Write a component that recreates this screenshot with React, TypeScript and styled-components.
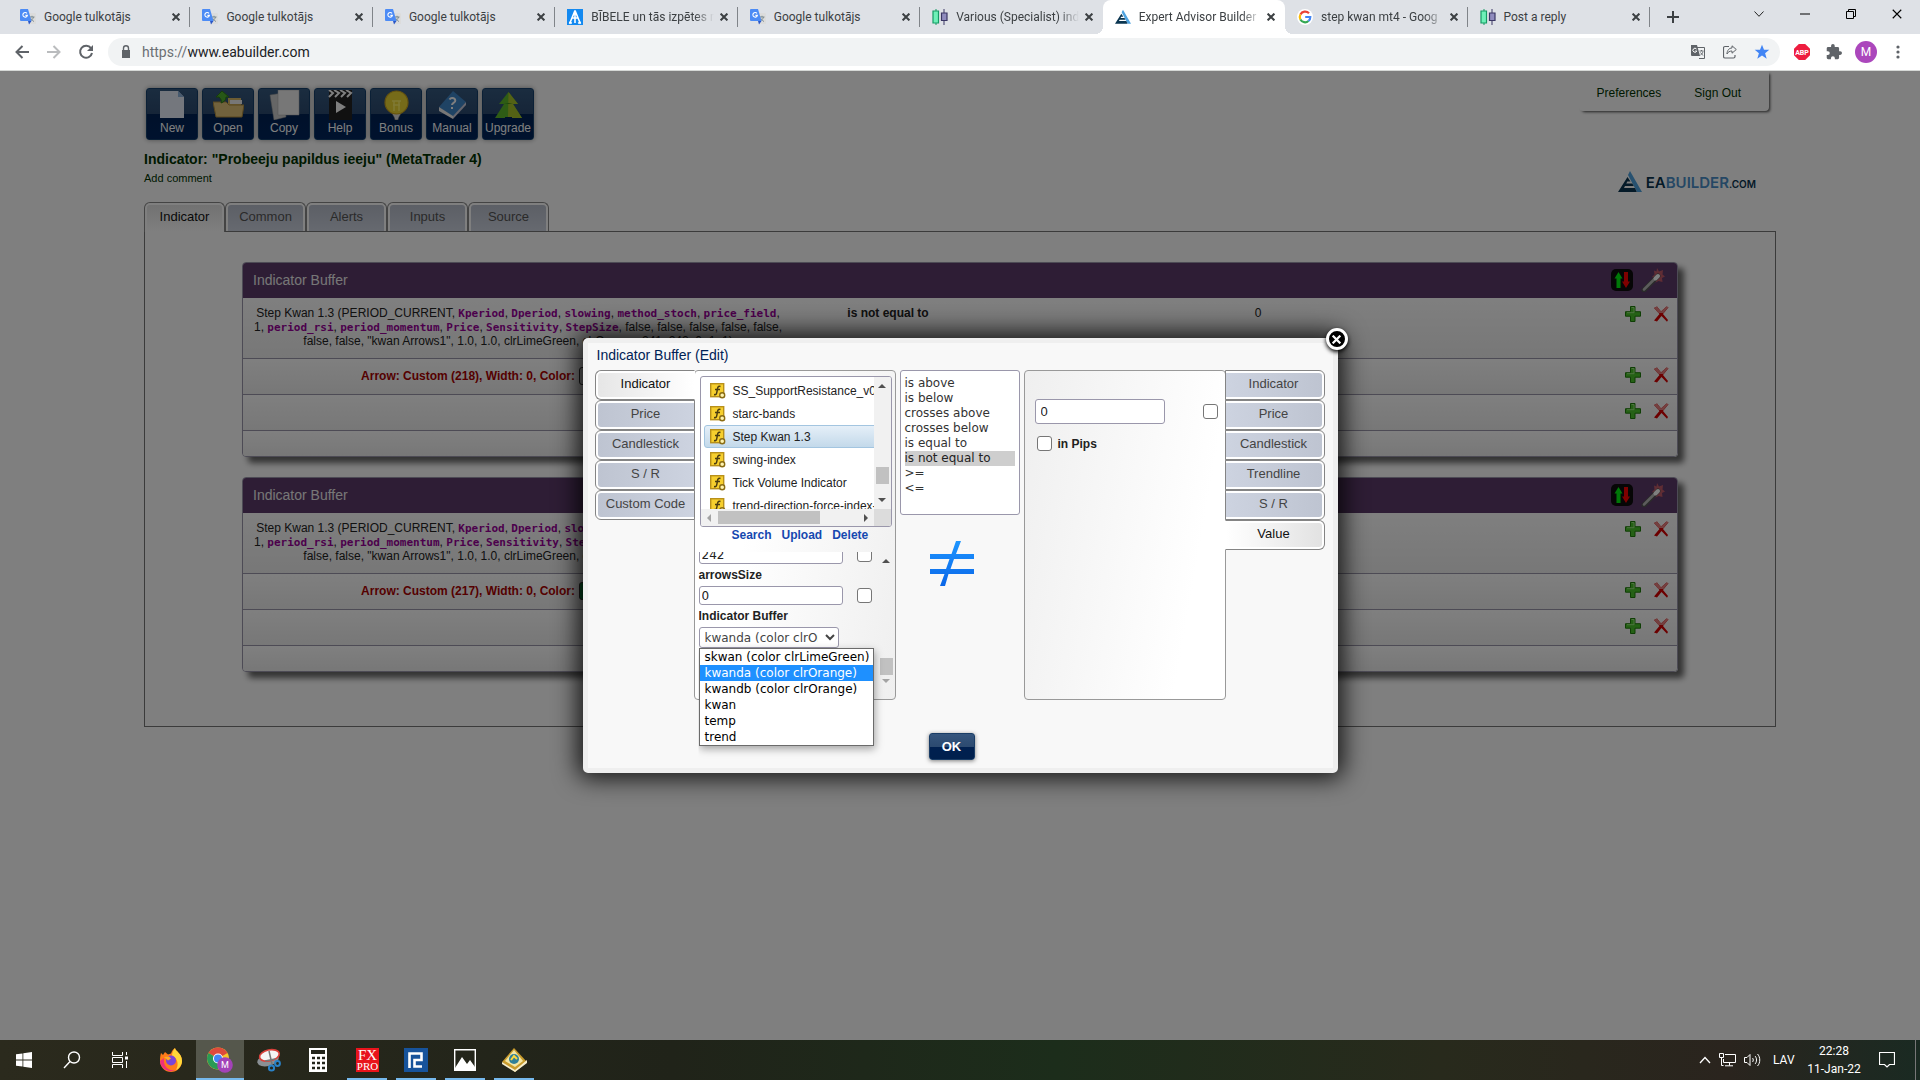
import React, { useState } from "react";
import styled, { createGlobalStyle, css } from "styled-components";

const ui = `Roboto, "Open Sans", sans-serif`;
const arial = `"Liberation Sans", Arial, sans-serif`;
const verdana = `"DejaVu Sans", Verdana, sans-serif`;

const GlobalStyle = createGlobalStyle`
  *, *::before, *::after { box-sizing: border-box; }
  body { margin: 0; font-family: ${arial}; font-size: 12px; color: #222; }
  button { font: inherit; color: inherit; border: 0; background: none; padding: 0; cursor: pointer; }
  ul { list-style: none; margin: 0; padding: 0; }
  a { color: inherit; text-decoration: none; }
  svg { display: block; flex: none; }
`;

const Screen = styled.div`
  height: 100vh;
  display: flex;
  flex-direction: column;
  overflow: hidden;
`;

/* ---------- browser frame ---------- */

const TabStrip = styled.div`
  height: 34px;
  flex: none;
  display: flex;
  background: #dee1e6;
  padding-left: 8px;
  font-family: ${ui};
  color: #3c4043;
`;
const BrowserTabs = styled.div`
  flex: 0 1 1642px;
  display: flex;
  min-width: 0;
`;
const BrowserTab = styled.div<{ $active?: boolean; $divider?: boolean }>`
  flex: 1 1 0;
  min-width: 0;
  display: flex;
  align-items: center;
  padding: 0 6px 0 12px;
  position: relative;
  border-radius: 8px 8px 0 0;
  background: ${(p) => (p.$active ? "#fff" : "transparent")};
  ${(p) =>
    p.$divider &&
    css`
      &::after {
        content: "";
        position: absolute;
        right: 0;
        top: 7px;
        height: 20px;
        width: 1px;
        background: #808489;
      }
    `}
  ${(p) =>
    p.$active &&
    css`
      &::before {
        content: "";
        position: absolute;
        left: -8px;
        right: -8px;
        bottom: 0;
        height: 8px;
        background:
          radial-gradient(circle at 0 0, transparent 8px, #fff 8px) left / 8px 8px no-repeat,
          radial-gradient(circle at 100% 0, transparent 8px, #fff 8px) right / 8px 8px no-repeat;
      }
    `}
`;
const TabTitle = styled.span<{ $fade?: boolean }>`
  flex: 1;
  min-width: 0;
  margin-left: 8px;
  font-size: 12px;
  line-height: 16px;
  white-space: nowrap;
  overflow: hidden;
  ${(p) => p.$fade && "mask-image: linear-gradient(to right, #000 84%, transparent);"}
`;
const TabClose = styled.button`
  width: 16px;
  height: 16px;
  margin-left: 2px;
  display: grid;
  place-items: center;
`;
const NewTab = styled.button`
  width: 28px;
  margin-left: 9px;
  display: grid;
  place-items: center;
`;
const WindowControls = styled.div`
  margin-left: auto;
  display: flex;
  height: 28px;
`;
const WindowButton = styled.button`
  width: 46px;
  display: grid;
  place-items: center;
`;
const AddressRow = styled.div`
  height: 37px;
  flex: none;
  display: flex;
  align-items: center;
  padding: 0 6px;
  background: #fff;
  border-bottom: 1px solid #d5d8d6;
  font-family: ${ui};
`;
const NavButton = styled.button`
  width: 32px;
  height: 32px;
  display: grid;
  place-items: center;
`;
const UrlPill = styled.div`
  flex: 1;
  height: 28px;
  margin: 0 6px;
  padding: 0 2px 0 11px;
  display: flex;
  align-items: center;
  gap: 9px;
  border-radius: 14px;
  background: #f1f3f4;
  font-size: 14px;
`;
const PillActions = styled.div`
  display: flex;
`;
const UrlText = styled.span`
  flex: 1;
  color: #202124;
  span { color: #6b6f73; }
`;
const Avatar = styled.span`
  width: 22px;
  height: 22px;
  border-radius: 50%;
  background: #ab47bc;
  color: #fff;
  font-size: 12px;
  line-height: 22px;
  text-align: center;
`;

/* ---------- web page ---------- */

const Page = styled.main`
  flex: 1;
  min-height: 0;
  position: relative;
  background: #fff;
  padding: 0 144px;
  overflow: hidden;
`;
const PageTop = styled.div`
  display: flex;
  justify-content: space-between;
  align-items: flex-start;
`;
const Toolbar = styled.div`
  display: flex;
  gap: 4px;
  padding: 17px 2px 0;
`;
const ToolButton = styled.button`
  width: 52px;
  height: 52px;
  display: flex;
  flex-direction: column;
  align-items: center;
  padding-top: 1px;
  border: 1px solid #16406c;
  border-radius: 3px;
  background: linear-gradient(#35597f, #2c4a70 50%, #002255 50%, #00255c);
  box-shadow: 0 0 5px rgba(0, 0, 0, 0.4);
  color: #fff;
  line-height: 16px;
`;
const AccountLinks = styled.nav`
  display: flex;
  gap: 33px;
  height: 40px;
  margin-right: 7px;
  padding: 14px 28px 0 18px;
  line-height: 16px;
  color: #003300;
  border-radius: 0 0 4px 4px;
  box-shadow: 2px 2px 3px -1px #444;
`;
const Heading = styled.div`
  display: flex;
  justify-content: space-between;
  align-items: flex-start;
  height: 44px;
  margin: 9px 0;
  color: #003300;
`;
const PageTitle = styled.h1`
  margin: 0;
  font-size: 14px;
  line-height: 20px;
`;
const CommentLink = styled.a`
  font-size: 11px;
  line-height: 18px;
`;
const Brand = styled.a`
  display: flex;
  align-items: center;
  gap: 4px;
  margin: 22px 20px 0 0;
  height: 22px;
  font-family: Inter, sans-serif;
  font-weight: 600;
  font-size: 15px;
  color: #0a3550;
  em { font-style: normal; color: #4b8fc8; }
  small { font-size: 10px; }
`;
const PageTabs = styled.div`
  display: flex;
`;
const PageTab = styled.button<{ $active?: boolean }>`
  display: flex;
  align-items: flex-start;
  justify-content: center;
  width: 81px;
  height: 29px;
  padding: 2px 2px 0;
  font-size: 13px;
  line-height: 24px;
  border: 1px solid #888;
  border-bottom: 0;
  border-radius: 6px 6px 0 0;
  background: ${(p) =>
    p.$active
      ? "linear-gradient(#e4e4e4, #fff) content-box, #fff"
      : "linear-gradient(#b9bfcc, #cdd3e0) content-box, #fff"};
  color: ${(p) => (p.$active ? "#111" : "#555")};
  ${(p) => p.$active && "height: 30px; margin-bottom: -1px; position: relative;"}
`;
const Workspace = styled.section`
  display: flex;
  flex-direction: column;
  gap: 20px;
  padding: 30px 97px 54px;
  border: 1px solid #777;
`;
const Card = styled.article`
  border: 1px solid #9a97ab;
  border-radius: 4px;
  overflow: hidden;
  box-shadow: 6px 6px 6px #666;
`;
const CardHeader = styled.header`
  height: 35px;
  display: flex;
  align-items: center;
  padding: 0 12px 2px 10px;
  gap: 8px;
  background: #5c3a6b;
  color: #eee;
  h2 { flex: 1; margin: 0; font-size: 14px; font-weight: 400; }
`;
const Row = styled.div<{ $h: number }>`
  min-height: ${(p) => p.$h}px;
  display: grid;
  grid-template-columns: 1fr 190px 1fr 144px;
  padding-top: 8px;
  line-height: 14px;
  text-align: center;
  white-space: nowrap;
  background: linear-gradient(#fff, #efefef);
  & + & { border-top: 1px solid #9a97ab; }
`;
const Param = styled.b`
  font-family: "DejaVu Sans Mono", "Liberation Mono", monospace;
  font-size: 11px;
  line-height: 12px;
  color: #990099;
`;
const ArrowSpec = styled.div`
  display: flex;
  justify-content: center;
  align-items: center;
  height: 18px;
  gap: 4px;
  font-weight: 700;
  color: #aa0000;
`;
const Swatch = styled.span<{ $color: string }>`
  width: 96px;
  height: 18px;
  border: 1px solid #333;
  border-radius: 3px;
  background: ${(p) => p.$color};
`;
const RowActions = styled.div`
  grid-column: 4;
  display: flex;
  justify-content: flex-end;
  align-items: flex-start;
  gap: 12px;
  padding-right: 8px;
`;

/* ---------- dialog ---------- */

const Backdrop = styled.div`
  position: absolute;
  inset: 0;
  display: flex;
  align-items: center;
  justify-content: center;
  background: rgba(0, 0, 0, 0.5);
`;
const Dialog = styled.div`
  position: relative;
  padding: 0 8px 8px 7px;
  border: 5px solid #efefef;
  border-radius: 5px;
  background: #f8f8f8;
  box-shadow: 0 0 25px 5px rgba(0, 0, 0, 0.85);
`;
const DialogTitle = styled.h2`
  margin: 0;
  padding-left: 2px;
  height: 27px;
  font-size: 14px;
  font-weight: 400;
  line-height: 24px;
  color: #002255;
`;
const CloseButton = styled.button`
  position: absolute;
  top: -15px;
  right: -15px;
  width: 22px;
  height: 22px;
  border: 3px solid #fff;
  border-radius: 50%;
  background: #000;
  box-shadow: 0 2px 4px #000;
  display: grid;
  place-items: center;
`;
const Columns = styled.div`
  display: flex;
  height: 330px;
`;
const SideTabs = styled.div`
  width: 99px;
`;
const SideTab = styled.button<{ $side: "left" | "right"; $active?: boolean }>`
  display: flex;
  align-items: flex-start;
  justify-content: center;
  position: relative;
  width: 100px;
  height: 30px;
  font-size: 13px;
  line-height: 22px;
  border: 1px solid #848484;
  color: ${(p) => (p.$active ? "#111" : "#444")};
  ${(p) =>
    p.$side === "left"
      ? css`
          border-right-color: ${p.$active ? "transparent" : "#848484"};
          border-radius: 6px 0 0 6px;
          padding: 2px 0 2px 2px;
          background:
            ${p.$active ? "linear-gradient(to right, #e6e6e6, #fff)" : "linear-gradient(to right, #bec4d1, #cdd3e0)"} content-box,
            #fff;
        `
      : css`
          margin-left: -1px;
          border-left-color: ${p.$active ? "transparent" : "#848484"};
          border-radius: 0 6px 6px 0;
          padding: 2px 2px 2px 0;
          background:
            ${p.$active ? "linear-gradient(to left, #e2e2e2, #fff)" : "linear-gradient(to left, #bec4d1, #cdd3e0)"} content-box,
            #fff;
        `}
`;
const Panel = styled.div<{ $side: "left" | "right" }>`
  width: 202px;
  border: 1px solid #999;
  border-radius: 4px;
  background: ${(p) =>
    p.$side === "left" ? "linear-gradient(100deg, #fff 30%, #efefef)" : "linear-gradient(100deg, #efefef, #fff 80%)"};
`;
const Middle = styled.div`
  width: 120px;
  margin: 0 4px;
  > svg { margin: 26px 0 0 30px; }
`;
const ConditionList = styled.select`
  display: block;
  width: 120px;
  height: 145px;
  padding: 5px 4px 4px;
  border: 1px solid #9a97ab;
  border-radius: 3px;
  background: #fff;
  font-family: ${verdana};
  font-size: 12px;
  color: #333;
  overflow: hidden;
  option { height: 15px; min-height: 15px; line-height: 15px; padding: 0; }
  option:checked { background: #cecece; color: #222; }
`;
const IndicatorBox = styled.div`
  width: 192px;
  height: 151px;
  margin: 5px 0 0 5px;
  display: grid;
  grid-template: 1fr 17px / 1fr 17px;
  border: 1px solid #9a97ab;
  border-radius: 3px;
  background: #fff;
  overflow: hidden;
`;
const IndicatorItems = styled.ul`
  overflow: hidden;
  padding: 2px 0 0 3px;
`;
const IndicatorItem = styled.li<{ $selected?: boolean }>`
  display: flex;
  align-items: center;
  gap: 7px;
  width: 180px;
  height: 23px;
  padding: 0 5px;
  border: 1px solid ${(p) => (p.$selected ? "#a3c5e0" : "transparent")};
  border-radius: 3px;
  background: ${(p) => (p.$selected ? "linear-gradient(#e5eff8, #c3d9ea)" : "none")};
  white-space: nowrap;
`;
const VBar = styled.div<{ $top: number; $track: string }>`
  width: 17px;
  display: flex;
  flex-direction: column;
  align-items: center;
  justify-content: space-between;
  padding: 5px 0;
  background: ${(p) => p.$track};
  i { width: 13px; height: 17px; margin-top: ${(p) => p.$top}px; background: #c1c1c1; }
`;
const HBar = styled.div`
  height: 17px;
  display: flex;
  align-items: center;
  padding: 0 4px;
  background: #f1f1f1;
  i { width: 102px; height: 13px; margin: 0 auto 0 5px; background: #c1c1c1; }
`;
const BarCorner = styled.div`
  background: #dcdcdc;
`;
const LinkRow = styled.div`
  display: flex;
  justify-content: flex-start;
  gap: 10px;
  height: 25px;
  padding-left: 37px;
  line-height: 16px;
  font-weight: 700;
  color: #1548b0;
`;
const ParamArea = styled.div`
  display: flex;
  justify-content: space-between;
  height: 138px;
  padding-left: 4px;
`;
const Fields = styled.div`
  position: relative;
  z-index: 1;
  clip-path: inset(0 -20px -80px 0);
`;
const FieldStack = styled.div`
  margin-top: -7px;
`;
const FieldRow = styled.div`
  display: flex;
  align-items: center;
  gap: 14px;
  height: 19px;
`;
const FieldLabel = styled.label`
  display: block;
  font-weight: 700;
  line-height: 22px;
`;
const TextInput = styled.input`
  width: 144px;
  height: 19px;
  padding: 0 2px;
  border: 1px solid #9a97ab;
  border-radius: 3px;
  background: #fff;
  font-family: ${verdana};
  font-size: 12px;
  color: #222;
`;
const ValueInput = styled(TextInput)`
  width: 130px;
  height: 25px;
  padding: 0 5px;
  font-family: ${arial};
  font-size: 13px;
`;
const Check = styled.input`
  appearance: none;
  width: 15px;
  height: 15px;
  margin: 0;
  border: 1px solid #767676;
  border-radius: 3px;
  background: #fff;
`;
const BufferSelect = styled.select`
  display: block;
  width: 140px;
  height: 21px;
  padding: 0 4px 0 1px;
  border: 1px solid #9a97ab;
  border-radius: 3px;
  background: #fff;
  font-family: ${verdana};
  font-size: 12px;
  color: #444;
`;
const Popup = styled.ul`
  position: absolute;
  left: 0;
  top: 96px;
  width: 175px;
  border: 1px solid #6b6b6b;
  background: #fff;
  box-shadow: 1px 3px 8px rgba(0, 0, 0, 0.35);
  font-family: ${verdana};
  color: #000;
`;
const PopupItem = styled.li<{ $selected?: boolean }>`
  height: 16px;
  padding-left: 5px;
  line-height: 16px;
  white-space: nowrap;
  ${(p) => p.$selected && "background: #1e90ff; color: #fff;"}
`;
const ValueRow = styled.div`
  display: flex;
  align-items: center;
  justify-content: space-between;
  padding: 28px 7px 0 10px;
`;
const PipsLabel = styled.label`
  display: flex;
  align-items: center;
  gap: 6px;
  padding: 12px 12px;
  font-weight: 700;
`;
const DialogFooter = styled.div`
  display: flex;
  justify-content: center;
  padding: 33px 16px 0 0;
`;
const OkButton = styled.button`
  width: 46px;
  height: 27px;
  border: 1px solid #1a3d66;
  border-radius: 3px;
  background: linear-gradient(#35557d, #2c4a70 50%, #002050 50%, #00204d);
  box-shadow: 0 1px 4px rgba(0, 0, 0, 0.5);
  color: #fff;
  font-size: 13px;
  font-weight: 700;
`;

/* ---------- task bar ---------- */

const TaskBar = styled.footer`
  height: 40px;
  flex: none;
  display: flex;
  background: linear-gradient(to right, #2b2a1d, #202319 35%, #1c2d1b 55%, #282a1c 75%, #2a241e 90%, #1a2a22);
  color: #fff;
  font-family: ${ui};
`;
const TaskButton = styled.button<{ $state?: "open" | "active" }>`
  width: 48px;
  height: 40px;
  display: grid;
  place-items: center;
  background: ${(p) => (p.$state === "active" ? "#55574c" : "none")};
  position: relative;
  ${(p) =>
    p.$state &&
    css`
      &::after {
        content: "";
        position: absolute;
        bottom: 0;
        left: ${p.$state === "active" ? 0 : 4}px;
        right: ${p.$state === "active" ? 0 : 4}px;
        height: 2px;
        background: #76b9ed;
      }
    `}
`;
const Apps = styled.div`
  display: flex;
  gap: 1px;
  margin-left: 3px;
`;
const Tray = styled.div`
  margin-left: auto;
  display: flex;
  align-items: center;
  gap: 8px;
  padding-right: 4px;
`;
const Clock = styled.time`
  width: 58px;
  margin-right: 8px;
  line-height: 18px;
  text-align: center;
`;
const Lang = styled.span`
  width: 22px;
  margin: 0 2px 0 4px;
`;
const Notice = styled.span`
  padding-right: 20px;
  border-right: 1px solid #777;
  height: 40px;
  display: grid;
  place-items: center;
`;

/* ---------- icons ---------- */

const Cross = ({ s = 8, w = 2, c = "#3c4043" }) => (
  <svg width={s} height={s} viewBox="0 0 8 8"><path d="M.6.6l6.8 6.8M7.4.6L.6 7.4" stroke={c} strokeWidth={w} /></svg>
);

const Favicon = ({ kind }: { kind: string }) => {
  if (kind === "translate")
    return (
      <svg width="16" height="16" viewBox="0 0 16 16">
        <path d="M6 4h9a1 1 0 011 1v10H9z" fill="#dcdcdc" />
        <path d="M9.500 8h5M12 6.800v1.200M13.500 8c-.5 2-2 3.500-3.500 4M11 9.500c.8 1.500 2 2.500 3 3" stroke="#7b8a8f" fill="none" />
        <path d="M1 0h7l3.500 12H1a1 1 0 01-1-1V1a1 1 0 011-1z" fill="#4c8bf5" />
        <path d="M8 12h3.500L9 15.500z" fill="#2a56c6" />
        <path d="M7 4.400a2.300 2.300 0 10.4 2H5.400" stroke="#fff" strokeWidth="1.100" fill="none" />
      </svg>
    );
  if (kind === "bible")
    return (
      <svg width="16" height="16" viewBox="0 0 16 16">
        <path d="M0 0h16v16H0z" fill="#1389f0" />
        <path d="M8 1.500L2.500 15M8 1.500L13.500 15M8 2v12M5.500 9h5M2 13.500l3 .5M14 13.500l-3 .5" stroke="#fff" strokeWidth="1.600" fill="none" />
      </svg>
    );
  if (kind === "candles")
    return (
      <svg width="16" height="16" viewBox="0 0 16 16">
        <path d="M4 0v16" stroke="#159b64" /><path d="M12 0v16" stroke="#3b3764" />
        <path d="M1 2h5.500v12H1z" fill="#6ff0b8" stroke="#159b64" strokeWidth="1.200" />
        <path d="M9.500 4h5.500v7.500H9.500z" fill="#8f8bbd" stroke="#3b3764" strokeWidth="1.200" />
      </svg>
    );
  if (kind === "ea") return <Peak s={16} />;
  return (
    <svg width="16" height="16" viewBox="0 0 16 16">
      <circle cx="8" cy="8" r="8" fill="#fff" />
      <g fill="none" strokeWidth="2.200">
        <path d="M12 4.300A5.300 5.300 0 003.400 5.500" stroke="#ea4335" />
        <path d="M3.400 5.500a5.300 5.300 0 000 5" stroke="#fbbc05" />
        <path d="M3.400 10.500a5.300 5.300 0 008.100 1.500" stroke="#34a853" />
        <path d="M11.500 12A5.300 5.300 0 0013.300 8H8.200" stroke="#4285f4" />
      </g>
    </svg>
  );
};

const Peak = ({ s = 24 }) => (
  <svg width={s} height={s} viewBox="0 0 24 22">
    <path d="M12 0l12 21h-5L10 4z" fill="#4ea3e0" />
    <path d="M9.500 6l3 4.500H9.300l-1 2h6l1.400 2.500H7l-1 2h11l1.800 4H0z" fill="#0a3550" />
  </svg>
);

const toolIcons: Record<string, React.ReactNode> = {
  New: <><path d="M3 1h18l6 6v21H3z" fill="#e8eefa" /><path d="M21 1v6h6z" fill="#8fb4dd" /></>,
  Open: <><path d="M15 8h13v8H15z" fill="#d8b967" /><path d="M17 10h12v4H17z" fill="#eee" /><path d="M0 12h13l3 3h15l-2 12H3z" fill="#e3c47a" stroke="#b08c3c" /><path d="M9 1l7 6h-3c0 3-2 5-5 6 1-2 0-4-2-6H3z" fill="#4fae2d" stroke="#2f7a17" /></>,
  Copy: <><path d="M1 5l13-2 3 24-12 3z" fill="#ccc" stroke="#999" strokeWidth=".5" /><path d="M9 0h21v25H9z" fill="#eee" stroke="#aaa" strokeWidth=".5" /></>,
  Help: <><path d="M4 0h23v30H4z" fill="#222" /><path d="M4 0l4 3-4 4M9 0l5 3-4 4M15 0l5 3-4 4M21 0l5 3-4 4" stroke="#fff" strokeWidth="2" fill="none" /><path d="M11 11l10 6-10 6z" fill="#fff" /></>,
  Bonus: <><path d="M10 22h11l-3 5-1 3h-3l-1-3z" fill="#ddd" stroke="#555" strokeWidth=".5" /><circle cx="15.500" cy="12.500" r="11.500" fill="#ecd632" stroke="#caa41e" strokeWidth="1.200" /><path d="M11 11h9M12 15h7M13 11v10M18 11v10" stroke="#fff36a" strokeWidth="1.500" /></>,
  Manual: <><path d="M2 17L16 1l13 11-13 15z" fill="#3f86c8" /><path d="M2 17v4l14 8v-3z" fill="#eee" /><path d="M16 26l13-14v3L16 29z" fill="#ccd" /><path d="M12.500 9.500c2-3 7-1 5.500 2-1 1.500-3 1.500-3 3.500M14 18h2" stroke="#fff" strokeWidth="2" fill="none" /></>,
  Upgrade: <><path d="M15.500 2L25 14h-5l9 14H19v-1h-7v1H2l9-14H6z" fill="#5cb82a" /><path d="M15.500 2L25 14h-5l9 14H19v-1h-4z" fill="#a9c42a" /><path d="M11 14h9l-4.500-1z" fill="#3c8a18" /></>,
};

const IconPlus = () => (
  <svg width="16" height="16" viewBox="0 0 16 16"><path d="M5.500.5h4.500v5.200h5.500v4.500H10v5.300H5.500v-5.300H.5V5.700h5z" fill="#4bc22a" stroke="#1f7d0a" /><path d="M6.500 1.500h2.500v5.200h-7" stroke="#9be67f" fill="none" /></svg>
);
const IconDelete = () => (
  <svg width="16" height="16" viewBox="0 0 16 16"><path d="M1 2l3-1.500 4 5L13.500.5l2 .8L10 8l5 6-1 1.800L8.500 10 4 15.500l-3-1L6.500 8z" fill="#d80000" /><path d="M1 2l3-1.500 4 5L13.500.5l2 .8L10.500 7h-5z" fill="#e88080" /></svg>
);
const IconUpDown = () => (
  <svg width="22" height="22" viewBox="0 0 22 22"><rect width="22" height="22" rx="5" fill="#0c0c0c" /><path d="M7.500 3l4 6.500H9.500V19h-4V9.500H3.500z" fill="#00f010" /><path d="M15 19l-4-6.500h2V3h4v9.500h2z" fill="#ff0000" /></svg>
);
const IconWand = () => (
  <svg width="24" height="24" viewBox="0 0 24 24"><path d="M16 0l2 3.500 4-1.500-.5 4.500 2.500 2-3 1.500.5 4-4-1-3 1.500-.5-4-3-1.500 2.500-2.500L13 2.500l2.500 1z" fill="#c05a68" /><path d="M3 22L17 8" stroke="#555" strokeWidth="5" strokeLinecap="round" /><path d="M3 21.500L14 10.500" stroke="#b8b8b8" strokeWidth="2.500" strokeLinecap="round" /><path d="M14.500 10.500L17 8" stroke="#fff" strokeWidth="4" strokeLinecap="round" /></svg>
);
const IconFunction = () => (
  <svg width="16" height="16" viewBox="0 0 16 16">
    <rect x=".7" y=".7" width="13" height="13" fill="#f6cf2e" stroke="#b8901a" strokeWidth="1.400" />
    <path d="M10.500 3.500c-3-1-3 2-3.500 5s-1 3.500-3 3M5 6.500h5" stroke="#4a3c10" strokeWidth="1.500" fill="none" />
    <circle cx="12.200" cy="12.200" r="2.500" fill="#fff3b0" stroke="#8a6c14" strokeWidth="1.400" />
  </svg>
);
const Tri = ({ dir, c = "#505050" }: { dir: "up" | "down" | "left" | "right"; c?: string }) => {
  const d = { up: "M0 6l4-4 4 4z", down: "M0 2l4 4 4-4z", left: "M6 0L2 4l4 4z", right: "M2 0l4 4-4 4z" }[dir];
  return <svg width="8" height="8" viewBox="0 0 8 8"><path d={d} fill={c} /></svg>;
};

/* ---------- data ---------- */

const tabs = [
  ["translate", "Google tulkotājs"],
  ["translate", "Google tulkotājs"],
  ["translate", "Google tulkotājs"],
  ["bible", "BĪBELE un tās izpētes m"],
  ["translate", "Google tulkotājs"],
  ["candles", "Various (Specialist) ind"],
  ["ea", "Expert Advisor Builder"],
  ["google", "step kwan mt4 - Goog"],
  ["candles", "Post a reply"],
];
const indicators = ["SS_SupportResistance_v04", "starc-bands", "Step Kwan 1.3", "swing-index", "Tick Volume Indicator", "trend-direction-force-index-"];
const conditions = ["is above", "is below", "crosses above", "crosses below", "is equal to", "is not equal to", ">=", "<="];
const buffers = ["skwan (color clrLimeGreen)", "kwanda (color clrOrange)", "kwandb (color clrOrange)", "kwan", "temp", "trend"];

const Actions = () => (
  <RowActions>
    <button aria-label="Add"><IconPlus /></button>
    <button aria-label="Delete"><IconDelete /></button>
  </RowActions>
);

const BufferCard = ({ code, color }: { code: number; color: string }) => (
  <Card>
    <CardHeader>
      <h2>Indicator Buffer</h2>
      <button aria-label="Reverse"><IconUpDown /></button>
      <button aria-label="Wizard"><IconWand /></button>
    </CardHeader>
    <Row $h={60}>
      <div>
        Step Kwan 1.3 (PERIOD_CURRENT, <Param>Kperiod</Param>, <Param>Dperiod</Param>, <Param>slowing</Param>, <Param>method_stoch</Param>, <Param>price_field</Param>,<br />
        1, <Param>period_rsi</Param>, <Param>period_momentum</Param>, <Param>Price</Param>, <Param>Sensitivity</Param>, <Param>StepSize</Param>, false, false, false, false, false,<br />
        false, false, "kwan Arrows1", 1.0, 1.0, clrLimeGreen, clrOrange, 241, 242, 0, 1, 1)
      </div>
      <b>is not equal to</b>
      <div>0</div>
      <Actions />
    </Row>
    <Row $h={36}>
      <ArrowSpec>Arrow: Custom ({code}), Width: 0, Color: <Swatch $color={color} /></ArrowSpec>
      <Actions />
    </Row>
    <Row $h={36}><Actions /></Row>
    <Row $h={26} />
  </Card>
);

const EditDialog = () => {
  const [condition, setCondition] = useState("is not equal to");
  const [buffer, setBuffer] = useState(buffers[1]);
  return (
    <Dialog role="dialog" aria-label="Indicator Buffer (Edit)">
      <DialogTitle>Indicator Buffer (Edit)</DialogTitle>
      <CloseButton aria-label="Close"><Cross s={9} w={2} c="#fff" /></CloseButton>
      <Columns>
        <SideTabs>
          {["Indicator", "Price", "Candlestick", "S / R", "Custom Code"].map((t, i) => (
            <SideTab key={t} $side="left" $active={i === 0}>{t}</SideTab>
          ))}
        </SideTabs>
        <Panel $side="left">
          <IndicatorBox>
            <IndicatorItems>
              {indicators.map((n) => (
                <IndicatorItem key={n} $selected={n === "Step Kwan 1.3"}><IconFunction />{n}</IndicatorItem>
              ))}
            </IndicatorItems>
            <VBar $top={64} $track="#f1f1f1"><Tri dir="up" /><i /><Tri dir="down" /></VBar>
            <HBar><Tri dir="left" c="#a3a3a3" /><i /><Tri dir="right" /></HBar>
            <BarCorner />
          </IndicatorBox>
          <LinkRow><a href="#search">Search</a><a href="#upload">Upload</a><a href="#delete">Delete</a></LinkRow>
          <ParamArea>
            <Fields>
              <FieldStack>
                <FieldRow>
                  <TextInput aria-label="arrowCode" defaultValue="242" />
                  <Check type="checkbox" aria-label="arrowCode as input" />
                </FieldRow>
                <FieldLabel htmlFor="arrowsSize">arrowsSize</FieldLabel>
                <FieldRow>
                  <TextInput id="arrowsSize" defaultValue="0" />
                  <Check type="checkbox" aria-label="arrowsSize as input" />
                </FieldRow>
                <FieldLabel htmlFor="buffer">Indicator Buffer</FieldLabel>
                <BufferSelect id="buffer" value={buffer} onChange={(e) => setBuffer(e.target.value)}>
                  {buffers.map((b) => <option key={b}>{b}</option>)}
                </BufferSelect>
              </FieldStack>
              <Popup role="listbox">
                {buffers.map((b) => (
                  <PopupItem key={b} role="option" aria-selected={b === buffer} $selected={b === buffer} onClick={() => setBuffer(b)}>{b}</PopupItem>
                ))}
              </Popup>
            </Fields>
            <VBar $top={90} $track="transparent"><Tri dir="up" /><i /><Tri dir="down" c="#a3a3a3" /></VBar>
          </ParamArea>
        </Panel>
        <Middle>
          <ConditionList size={8} aria-label="Condition" value={condition} onChange={(e) => setCondition(e.target.value)}>
            {conditions.map((c) => <option key={c}>{c}</option>)}
          </ConditionList>
          <svg width="44" height="45" viewBox="0 0 44 45">
            <defs><linearGradient id="ne" x2="0" y2="1"><stop offset="0" stopColor="#1e96ff" /><stop offset="1" stopColor="#0a66e8" /></linearGradient></defs>
            <path d="M26 0h5l-5 13h18v5H24l-3.500 10H44v5H18.500L15 45h-5l4.500-12H0v-5h16l3.500-10H0v-5h21.500z" fill="url(#ne)" />
          </svg>
        </Middle>
        <Panel $side="right">
          <ValueRow>
            <ValueInput aria-label="Value" defaultValue="0" />
            <Check type="checkbox" aria-label="Value as input" />
          </ValueRow>
          <PipsLabel><Check type="checkbox" />in Pips</PipsLabel>
        </Panel>
        <SideTabs>
          {["Indicator", "Price", "Candlestick", "Trendline", "S / R", "Value"].map((t, i) => (
            <SideTab key={t} $side="right" $active={i === 5}>{t}</SideTab>
          ))}
        </SideTabs>
      </Columns>
      <DialogFooter><OkButton>OK</OkButton></DialogFooter>
    </Dialog>
  );
};

export default function App() {
  return (
    <Screen>
      <GlobalStyle />
      <TabStrip>
        <BrowserTabs>
          {tabs.map(([kind, title], i) => (
            <BrowserTab key={i} $active={i === 6} $divider={i !== 5 && i !== 6}>
              <Favicon kind={kind} />
              <TabTitle $fade={title.length > 18}>{title}</TabTitle>
              <TabClose aria-label="Close tab"><Cross /></TabClose>
            </BrowserTab>
          ))}
        </BrowserTabs>
        <NewTab aria-label="New tab"><svg width="12" height="12"><path d="M6 0v12M0 6h12" stroke="#3c4043" strokeWidth="2" /></svg></NewTab>
        <WindowControls>
          <WindowButton aria-label="Search tabs"><svg width="10" height="6"><path d="M.5.5L5 5.300 9.500.5" stroke="#222" fill="none" /></svg></WindowButton>
          <WindowButton aria-label="Minimize"><svg width="10" height="2"><path d="M0 1h10" stroke="#000" /></svg></WindowButton>
          <WindowButton aria-label="Restore"><svg width="10" height="10"><path d="M.5 2.500h7v7h-7zM2.500 2.500v-2h7v7h-2" stroke="#000" fill="none" /></svg></WindowButton>
          <WindowButton aria-label="Close window"><Cross s={10} w={0.9} c="#000" /></WindowButton>
        </WindowControls>
      </TabStrip>
      <AddressRow>
        <NavButton aria-label="Back"><svg width="14" height="14" viewBox="0 0 14 14"><path d="M14 7H1.500M7.500 1l-6 6 6 6" stroke="#5f6368" strokeWidth="2" fill="none" /></svg></NavButton>
        <NavButton aria-label="Forward"><svg width="14" height="14" viewBox="0 0 14 14"><path d="M0 7h12.500M6.500 1l6 6-6 6" stroke="#babcbe" strokeWidth="2" fill="none" /></svg></NavButton>
        <NavButton aria-label="Reload"><svg width="16" height="16" viewBox="0 0 16 16"><path d="M13 4.200A6 6 0 1014 9" stroke="#5f6368" strokeWidth="2" fill="none" /><path d="M15 1v6H9z" fill="#5f6368" /></svg></NavButton>
        <UrlPill>
          <svg width="14" height="14" viewBox="0 0 14 14"><path d="M3 5h8v8H3z" fill="#5f6368" /><path d="M4.500 5.500V3.200a2.500 2.500 0 015 0v2.300" stroke="#5f6368" strokeWidth="1.400" fill="none" /></svg>
          <UrlText><span>https://</span>www.eabuilder.com</UrlText>
          <PillActions>
            <NavButton aria-label="Translate"><svg width="14" height="14" viewBox="0 0 14 14"><path d="M5.500 2.500h8v11H8" stroke="#5f6368" fill="#f1f3f4" /><path d="M0 0h6l3 11H1a1 1 0 01-1-1z" fill="#5f6368" /><path d="M5.500 4a2 2 0 10.3 2H4.200" stroke="#fff" fill="none" /><path d="M8.500 6h4M10.500 5v1M12 6.500c-.5 2-1.500 3-2.500 3.500M9.500 7.500l2.500 3" stroke="#5f6368" strokeWidth=".9" fill="none" /></svg></NavButton>
            <NavButton aria-label="Share"><svg width="14" height="14" viewBox="0 0 14 14"><path d="M6 1.500H2a1.500 1.500 0 00-1.500 1.500v8.500A1.500 1.500 0 002 13h8.500a1.500 1.500 0 001.500-1.500V10" stroke="#5f6368" fill="none" strokeWidth="1.200" /><path d="M9 .8l4.300 3.700L9 8.200V6c-2.500 0-4 1-5 3 0-3.500 2-6 5-6z" stroke="#5f6368" fill="none" /></svg></NavButton>
            <NavButton aria-label="Bookmark"><svg width="16" height="16" viewBox="0 0 16 16"><path d="M8 .8l2 5h5.300l-4.200 3.500 1.600 5.500L8 11.500l-4.700 3.300 1.600-5.500L.7 5.800H6z" fill="#4285f4" /></svg></NavButton>
          </PillActions>
        </UrlPill>
        <NavButton aria-label="Adblock"><svg width="16" height="16" viewBox="0 0 16 16"><path d="M4.800 0h6.400L16 4.800v6.400L11.200 16H4.800L0 11.200V4.800z" fill="#ee1d3f" /><text x="8" y="10.500" fontSize="7" fontWeight="700" fill="#fff" textAnchor="middle" fontFamily="Roboto, sans-serif">ABP</text></svg></NavButton>
        <NavButton aria-label="Extensions"><svg width="16" height="16" viewBox="1 1 22 22"><path d="M20.500 11H19V7a2 2 0 00-2-2h-4V3.500a2.500 2.500 0 00-5 0V5H4a2 2 0 00-2 2v3.800h1.500a2.700 2.700 0 010 5.400H2V20a2 2 0 002 2h3.800v-1.500a2.700 2.700 0 015.400 0V22H17a2 2 0 002-2v-4h1.500a2.500 2.500 0 000-5z" fill="#5f6368" /></svg></NavButton>
        <NavButton aria-label="Profile"><Avatar>M</Avatar></NavButton>
        <NavButton aria-label="Menu"><svg width="4" height="16"><g fill="#5f6368"><circle cx="2" cy="3" r="1.600" /><circle cx="2" cy="8" r="1.600" /><circle cx="2" cy="13" r="1.600" /></g></svg></NavButton>
      </AddressRow>

      <Page>
        <PageTop>
          <Toolbar>
            {Object.keys(toolIcons).map((name) => (
              <ToolButton key={name}><svg width="31" height="30" viewBox="0 0 31 30">{toolIcons[name]}</svg>{name}</ToolButton>
            ))}
          </Toolbar>
          <AccountLinks><a href="#preferences">Preferences</a><a href="#signout">Sign Out</a></AccountLinks>
        </PageTop>
        <Heading>
          <div>
            <PageTitle>Indicator: "Probeeju papildus ieeju" (MetaTrader 4)</PageTitle>
            <CommentLink href="#comment">Add comment</CommentLink>
          </div>
          <Brand href="#home"><Peak s={24} /><span>EA<em>BUILDER</em><small>.COM</small></span></Brand>
        </Heading>
        <PageTabs>
          {["Indicator", "Common", "Alerts", "Inputs", "Source"].map((t, i) => (
            <PageTab key={t} $active={i === 0}>{t}</PageTab>
          ))}
        </PageTabs>
        <Workspace>
          <BufferCard code={218} color="#ddd" />
          <BufferCard code={217} color="#0a8a3c" />
        </Workspace>
        <Backdrop><EditDialog /></Backdrop>
      </Page>

      <TaskBar>
        <TaskButton aria-label="Start"><svg width="16" height="16" viewBox="0 0 16 16"><path d="M0 2.300l6.500-.9v6.200H0zM7.300 1.300L16 0v7.600H7.300zM0 8.400h6.500v6.200L0 13.700zM7.300 8.400H16V16l-8.700-1.300z" fill="#fff" /></svg></TaskButton>
        <TaskButton aria-label="Search"><svg width="18" height="18" viewBox="0 0 18 18"><circle cx="11" cy="6.500" r="5.500" stroke="#fff" strokeWidth="1.400" fill="none" /><path d="M7 10.500L1 17" stroke="#fff" strokeWidth="1.400" /></svg></TaskButton>
        <TaskButton aria-label="Task view"><svg width="16" height="16" viewBox="0 0 16 16"><path d="M.5 0v3.500h10V0M.5 16v-3.500h10V16M.5 5.500h10v5H.5zM14.500 0v3M14.500 9v7" stroke="#fff" fill="none" /><path d="M13 4.500h3v3h-3z" fill="#fff" /></svg></TaskButton>
        <Apps>
          <TaskButton aria-label="Firefox"><svg width="24" height="24" viewBox="0 0 24 24"><path d="M2 5l2 2 2-3 3 2.500 3-1C13 2 15 1 16 0c0 3 7 5 7 13a11 11 0 01-22 0C1 9 1.500 7 2 5z" fill="#ff7b1a" /><path d="M16 0c0 3 7 5 7 13 0 4-3 8-6 9 3-5 2-12-4-14 0-3 1-6 3-8z" fill="#ffd83a" /><path d="M1 13a11 11 0 0015 9.500C9 23 4 18 5 10z" fill="#f0307a" /><circle cx="12" cy="12.500" r="5" fill="#7a45d8" /><path d="M5 9l5-.5 2 2-3 2z" fill="#ffab24" /></svg></TaskButton>
          <TaskButton aria-label="Chrome" $state="active"><svg width="26" height="26" viewBox="0 0 26 26"><circle cx="11" cy="11.500" r="11" fill="#f7c52b" /><path d="M11 11.500L1.500 6a11 11 0 0119 0z" fill="#dd4a3c" /><path d="M11 11.500L1.500 6A11 11 0 0011 22.500z" fill="#2a9a56" /><circle cx="11" cy="11.500" r="5" fill="#fff" /><circle cx="11" cy="11.500" r="4" fill="#4285f4" /><circle cx="18" cy="18" r="7.800" fill="#a342b8" /><text x="18" y="21" fontSize="9" fill="#fff" textAnchor="middle" fontFamily="Roboto, sans-serif">M</text></svg></TaskButton>
          <TaskButton aria-label="Snipping Tool"><svg width="24" height="24" viewBox="0 0 24 24"><ellipse cx="11" cy="12" rx="11" ry="6" fill="#8a8f94" transform="rotate(-15 11 12)" /><ellipse cx="12.500" cy="7.500" rx="10" ry="5.500" fill="#f4f4f4" stroke="#d8403a" strokeWidth="1.600" transform="rotate(-12 12 8)" /><path d="M8 13l10-2M12 3l3 13" stroke="#777" strokeWidth="1.500" /><circle cx="14.500" cy="20" r="2.600" stroke="#2a82c8" strokeWidth="2" fill="none" /><circle cx="20.500" cy="15.500" r="2.400" stroke="#2a82c8" strokeWidth="2" fill="none" /></svg></TaskButton>
          <TaskButton aria-label="Calculator"><svg width="18" height="24" viewBox="0 0 18 24"><path d="M0 0h18v24H0z" fill="#fff" /><path d="M2 2h14v4H2z" fill="#23251b" /><path d="M3 10h3M8 10h3M13 10h3M3 15h3M8 15h3M13 15h3M3 20h3M8 20h3M13 20h3" stroke="#23251b" strokeWidth="2.500" /></svg></TaskButton>
          <TaskButton aria-label="FxPro" $state="open"><svg width="23" height="24" viewBox="0 0 23 24"><path d="M0 0h23v24H0z" fill="#e8141c" /><g fill="#fff" fontFamily="Liberation Serif, serif" textAnchor="middle"><text x="11.500" y="12" fontSize="15">FX</text><text x="11.500" y="22" fontSize="11">PRO</text></g></svg></TaskButton>
          <TaskButton aria-label="Platform" $state="open"><svg width="24" height="24" viewBox="0 0 24 24"><path d="M0 0h24v24H0z" fill="#17539b" /><path d="M5.500 20V5.500h12V12h-7v6.500H18" stroke="#fff" strokeWidth="2.600" fill="none" /></svg></TaskButton>
          <TaskButton aria-label="Photos" $state="open"><svg width="22" height="22" viewBox="0 0 22 22"><path d="M.7.7h20.600v20.600H.7z" fill="none" stroke="#fff" strokeWidth="1.400" /><path d="M1 19l7-11 5 7 3-4 5 7v3H1z" fill="#fff" /></svg></TaskButton>
          <TaskButton aria-label="MetaTrader" $state="open"><svg width="25" height="24" viewBox="0 0 25 24"><path d="M0 14L12 0l13 14-12 10z" fill="#c99c2c" /><path d="M13 22L25 12v3L13 24zM0 14l13 8v2L0 16z" fill="#f5edcc" /><path d="M3 13L12 2l9 11-8 6z" fill="#f2e6a6" /><circle cx="12" cy="11" r="5" fill="#2f7f98" /><path d="M9 12l3-4 3 3" stroke="#ffd83a" strokeWidth="2" fill="none" /></svg></TaskButton>
        </Apps>
        <Tray>
          <svg width="12" height="8"><path d="M1 7l5-5.500L11 7" stroke="#fff" strokeWidth="1.300" fill="none" /></svg>
          <svg width="17" height="14" viewBox="0 0 17 14"><path d="M6 1.500h10.500v8H4.500V6M10.500 9.500v3M6 12.800h8M.5.5h4v4h-4zM2.500 4.500v8h2" stroke="#fff" fill="none" /></svg>
          <svg width="17" height="14" viewBox="0 0 17 14"><path d="M.5 4.500h2.500L6 1.500v11l-3-3H.5zM8.500 5c1 1 1 3 0 4M11 3c2 2 2 6 0 8M13.500 1c3 3 3 9 0 12" stroke="#fff" fill="none" /></svg>
          <Lang>LAV</Lang>
          <Clock>22:28<br />11-Jan-22</Clock>
          <Notice><svg width="16" height="16" viewBox="0 0 16 16"><path d="M.5.5h15v12h-5L8 15l-2.500-2.500h-5z" stroke="#fff" fill="none" strokeWidth="1.200" /></svg></Notice>
        </Tray>
      </TaskBar>
    </Screen>
  );
}
